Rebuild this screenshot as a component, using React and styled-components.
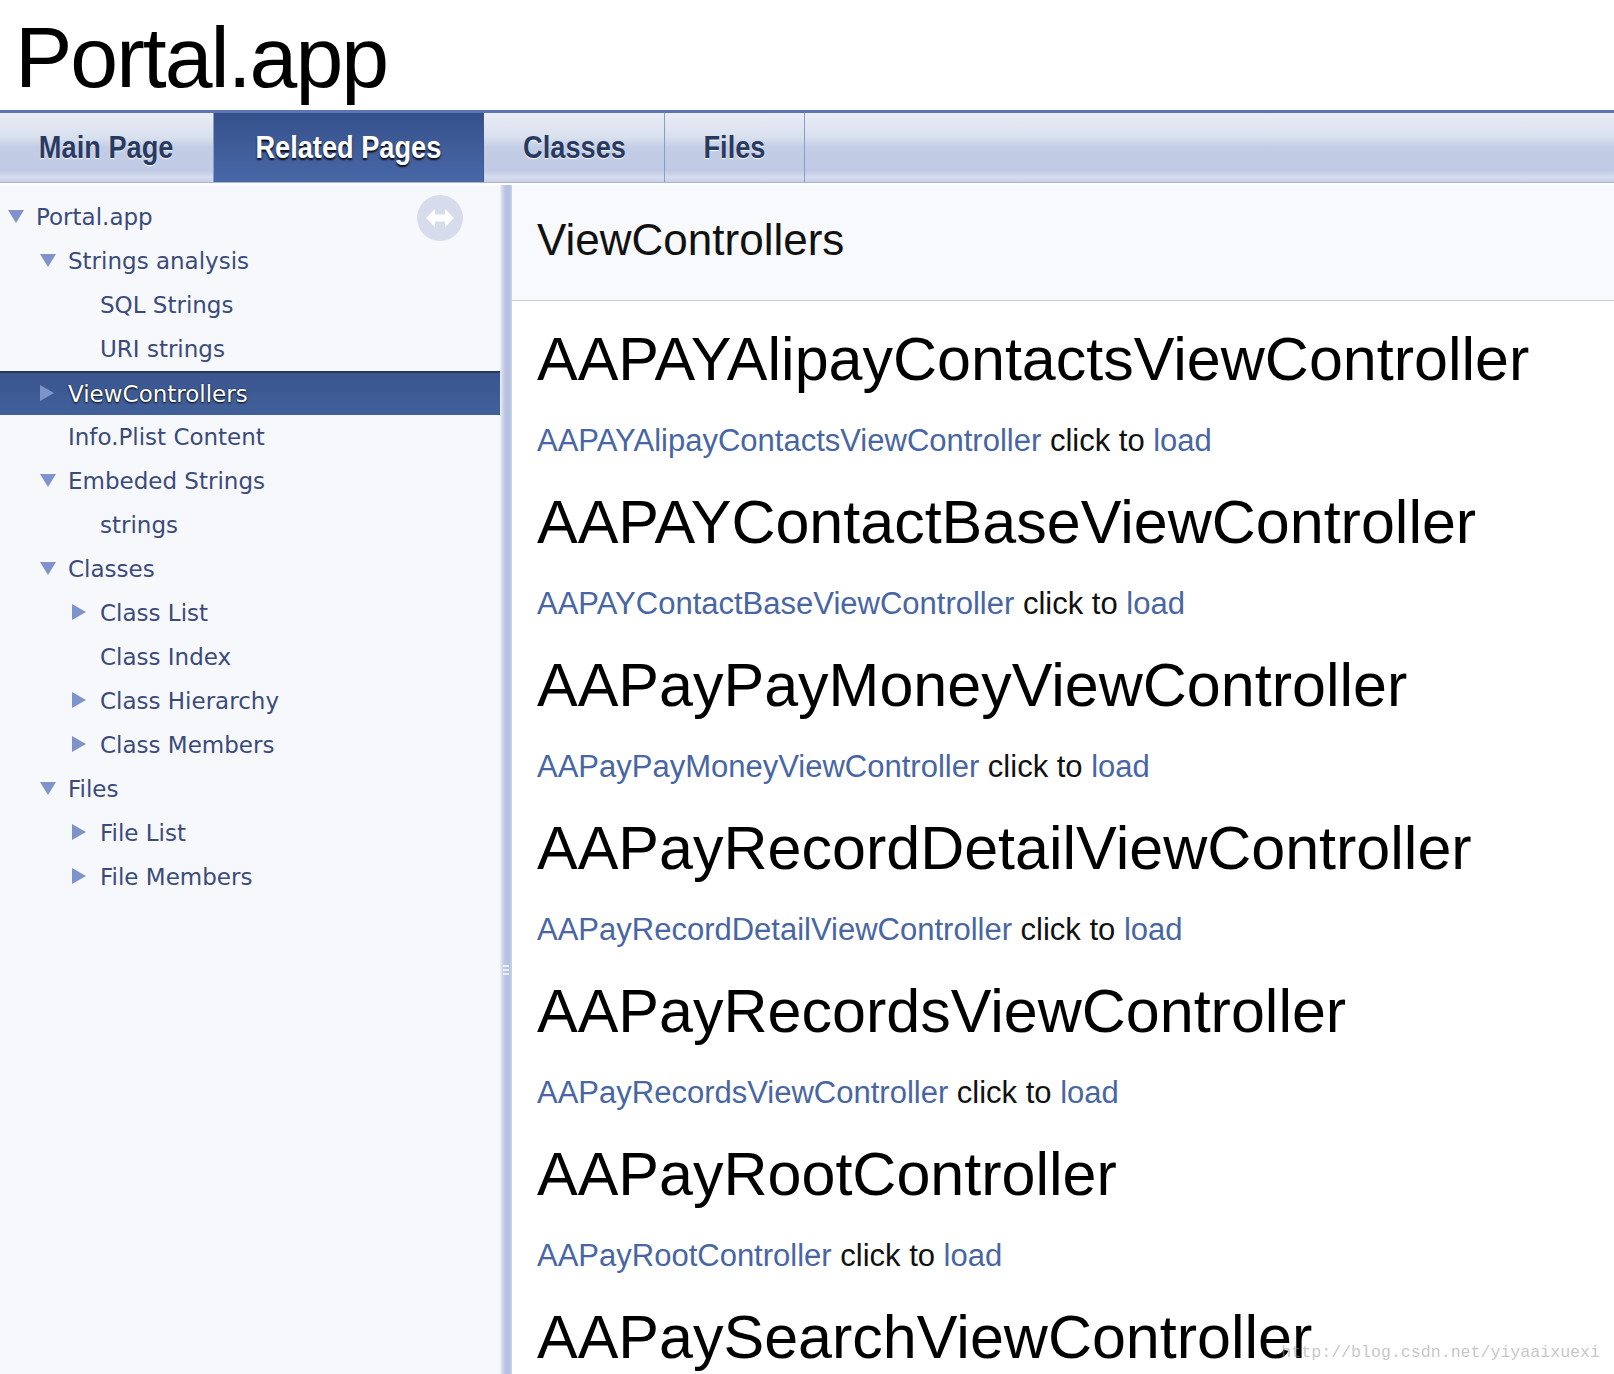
import styled, { createGlobalStyle } from "styled-components"

const GlobalStyle = createGlobalStyle`
  html, body {
    margin: 0;
    padding: 0;
    background: #fff;
  }
  body {
    width: 1614px;
    height: 1374px;
    overflow: hidden;
    font-family: "Liberation Sans", Arial, sans-serif;
  }
`

const tabs = [
  { label: "Main Page", width: 214 },
  { label: "Related Pages", width: 270, active: true },
  { label: "Classes", width: 181 },
  { label: "Files", width: 140 },
]

const tree = [
  { label: "Portal.app", level: 0, arrow: "down" },
  { label: "Strings analysis", level: 1, arrow: "down" },
  { label: "SQL Strings", level: 2 },
  { label: "URI strings", level: 2 },
  { label: "ViewControllers", level: 1, arrow: "right", selected: true },
  { label: "Info.Plist Content", level: 1 },
  { label: "Embeded Strings", level: 1, arrow: "down" },
  { label: "strings", level: 2 },
  { label: "Classes", level: 1, arrow: "down" },
  { label: "Class List", level: 2, arrow: "right" },
  { label: "Class Index", level: 2 },
  { label: "Class Hierarchy", level: 2, arrow: "right" },
  { label: "Class Members", level: 2, arrow: "right" },
  { label: "Files", level: 1, arrow: "down" },
  { label: "File List", level: 2, arrow: "right" },
  { label: "File Members", level: 2, arrow: "right" },
]

const controllers = [
  "AAPAYAlipayContactsViewController",
  "AAPAYContactBaseViewController",
  "AAPayPayMoneyViewController",
  "AAPayRecordDetailViewController",
  "AAPayRecordsViewController",
  "AAPayRootController",
  "AAPaySearchViewController",
]

const Triangle = ({ dir }) =>
  dir === "down" ? (
    <svg width="16" height="13" viewBox="0 0 16 13">
      <polygon points="0,0 16,0 8,13" fill="#7d93c9" />
    </svg>
  ) : (
    <svg width="14" height="16" viewBox="0 0 14 16">
      <polygon points="0,0 14,8 0,16" fill="#7d93c9" />
    </svg>
  )

const SyncIcon = () => (
  <svg width="46" height="46" viewBox="0 0 46 46">
    <circle cx="23" cy="23" r="23" fill="#d6dcec" />
    <polygon
      points="9,23 18,14 18,19.5 28,19.5 28,14 37,23 28,32 28,26.5 18,26.5 18,32"
      fill="#ffffff"
    />
  </svg>
)

const App = () => {
  return (
    <Page>
      <GlobalStyle />
      <Title>Portal.app</Title>
      <TabBar>
        {tabs.map((t) => (
          <Tab key={t.label} $active={t.active} $width={t.width}>
            <TabText>{t.label}</TabText>
          </Tab>
        ))}
        <TabRest />
      </TabBar>
      <Body>
        <Sidebar>
          {tree.map((item) => (
            <Row key={item.label} $level={item.level} $selected={item.selected}>
              <ArrowBox>{item.arrow && <Triangle dir={item.arrow} />}</ArrowBox>
              <RowLabel $selected={item.selected}>{item.label}</RowLabel>
            </Row>
          ))}
          <SyncButton>
            <SyncIcon />
          </SyncButton>
        </Sidebar>
        <Splitter>
          <Grip />
        </Splitter>
        <Content>
          <Header>ViewControllers</Header>
          <Entries>
            {controllers.map((name) => (
              <Entry key={name}>
                <Heading>{name}</Heading>
                <SubLine>
                  <Link>{name}</Link> click to <Link>load</Link>
                </SubLine>
              </Entry>
            ))}
          </Entries>
        </Content>
      </Body>
      <Watermark>http://blog.csdn.net/yiyaaixuexi</Watermark>
    </Page>
  )
}

export default App

const Page = styled.div`
  position: relative;
  width: 1614px;
  height: 1374px;
  overflow: hidden;
  display: flex;
  flex-direction: column;
`

const Title = styled.h1`
  margin: 0;
  height: 110px;
  box-sizing: border-box;
  padding: 7px 0 0 15px;
  font-family: "Liberation Sans", Arial, sans-serif;
  font-weight: normal;
  font-size: 86px;
  line-height: 100px;
  letter-spacing: -2px;
  color: #000;
`

const TabBar = styled.div`
  display: flex;
  height: 73px;
  box-sizing: border-box;
  border-top: 3px solid #5d76b2;
  border-bottom: 1px solid #aab5d1;
  background: linear-gradient(
    to bottom,
    #e9edf6 0%,
    #d9e0ee 35%,
    #c3cde6 50%,
    #c0cae4 84%,
    #d6ddef 93%,
    #c9d1e6 100%
  );
`

const Tab = styled.div`
  width: ${(p) => p.$width}px;
  flex-shrink: 0;
  box-sizing: border-box;
  display: flex;
  align-items: center;
  justify-content: center;
  border-right: 1px solid ${(p) => (p.$active ? "#3d5894" : "#8b9cc9")};
  color: ${(p) => (p.$active ? "#fff" : "#283a5f")};
  text-shadow: ${(p) =>
    p.$active ? "0 2px 2px rgba(0,0,0,0.9)" : "0 1px 1px rgba(255,255,255,0.9)"};
  background: ${(p) =>
    p.$active ? "linear-gradient(to bottom, #34508b 0%, #3f5c98 45%, #4867a7 100%)" : "transparent"};
`

const TabText = styled.span`
  display: inline-block;
  font-family: "Liberation Sans", Arial, sans-serif;
  font-weight: bold;
  font-size: 32px;
  white-space: nowrap;
  transform: scaleX(0.85);
`

const TabRest = styled.div`
  flex: 1;
`

const Body = styled.div`
  flex: 1;
  display: flex;
  margin-top: 2px;
  min-height: 0;
`

const Sidebar = styled.nav`
  position: relative;
  width: 500px;
  flex-shrink: 0;
  padding-top: 10px;
  background: #f7f8fc;
`

const Row = styled.div`
  display: flex;
  align-items: center;
  height: 44px;
  padding-left: ${(p) => 8 + p.$level * 32}px;
  box-sizing: border-box;
  background: ${(p) => (p.$selected ? "linear-gradient(to bottom, #3a5590, #41609a)" : "transparent")};
  border-top: ${(p) => (p.$selected ? "2px solid #26375c" : "none")};
`

const ArrowBox = styled.span`
  width: 28px;
  flex-shrink: 0;
  display: flex;
  align-items: center;
  margin-top: -2px;
`

const RowLabel = styled.span`
  font-family: "DejaVu Sans", Verdana, sans-serif;
  font-size: 23px;
  line-height: 44px;
  color: ${(p) => (p.$selected ? "#fff" : "#3a4b7b")};
  text-shadow: ${(p) => (p.$selected ? "0 1px 2px rgba(0,0,0,0.95), 0 0 1px rgba(0,0,0,0.6)" : "none")};
  white-space: nowrap;
`

const SyncButton = styled.div`
  position: absolute;
  top: 10px;
  left: 417px;
  width: 46px;
  height: 46px;
`

const Splitter = styled.div`
  position: relative;
  width: 12px;
  flex-shrink: 0;
  background: linear-gradient(
    to right,
    #eef1f8 0%,
    #d2daec 18%,
    #bac6e2 40%,
    #b3c0de 75%,
    #c9d2e8 100%
  );
  display: flex;
  justify-content: center;
  padding-top: 780px;
  box-sizing: border-box;
`

const Grip = styled.div`
  width: 6px;
  height: 12px;
  background: repeating-linear-gradient(to bottom, #e8edf7 0 2px, transparent 2px 4px);
`

const Content = styled.main`
  flex: 1;
  background: #fff;
  min-width: 0;
`

const Header = styled.div`
  background: #f8f9fc;
  border-bottom: 1px solid #c5cee3;
  padding: 29px 0 34px 25px;
  font-family: "Liberation Sans", Arial, sans-serif;
  font-size: 44px;
  line-height: 52px;
  color: #111;
`

const Entries = styled.div`
  padding: 22px 0 0 25px;
`

const Entry = styled.section``

const Heading = styled.h2`
  margin: 0;
  font-family: "Liberation Sans", Arial, sans-serif;
  font-weight: normal;
  font-size: 61px;
  line-height: 72px;
  color: #000;
  white-space: nowrap;
`

const SubLine = styled.p`
  margin: 26px 0 25px;
  font-family: "Liberation Sans", Arial, sans-serif;
  font-size: 31px;
  line-height: 40px;
  color: #111;
  white-space: nowrap;
`

const Link = styled.span`
  color: #4866a3;
`

const Watermark = styled.div`
  position: absolute;
  right: 14px;
  bottom: 12px;
  font-family: "Liberation Mono", "DejaVu Sans Mono", monospace;
  font-size: 16.6px;
  color: rgba(150, 150, 150, 0.55);
  white-space: nowrap;
`
